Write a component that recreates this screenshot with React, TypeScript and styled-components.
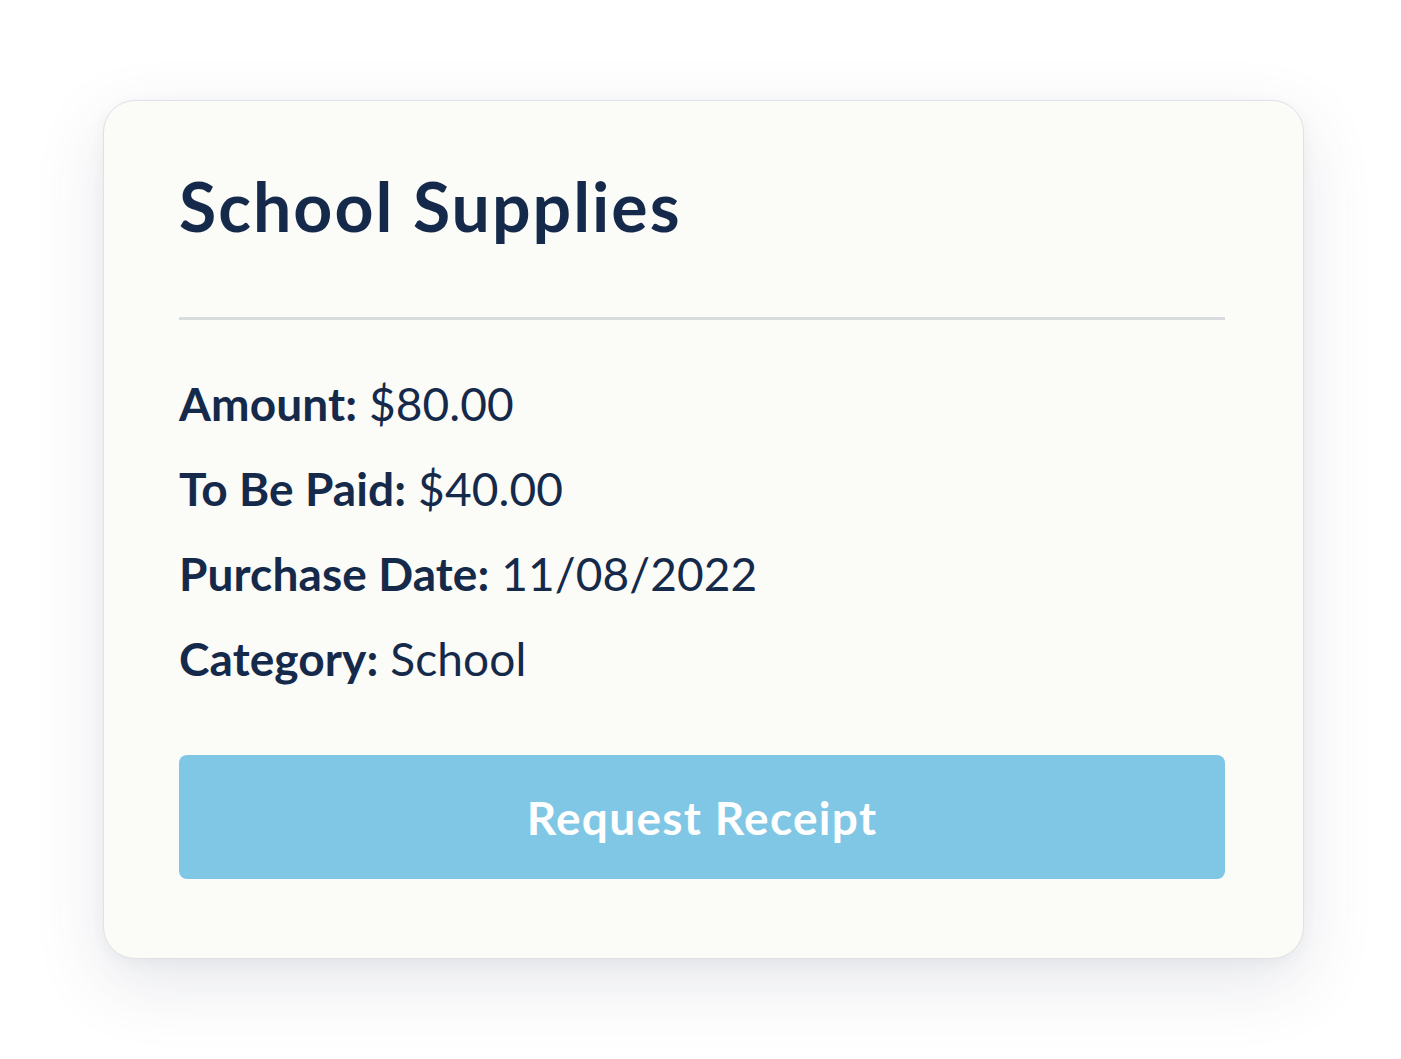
import React from "react";
import styled, { createGlobalStyle } from "styled-components";

const Global = createGlobalStyle`
  html, body { margin: 0; padding: 0; background: #ffffff; }
  body { font-family: "Lato", "Noto Sans", sans-serif; }
`;

const Page = styled.div`
  width: 1401px;
  height: 1059px;
  box-sizing: border-box;
  padding: 100px 97px 100px 103px;
  display: flex;
`;

const Card = styled.div`
  flex: 1;
  box-sizing: border-box;
  background: #fbfbf8;
  border: 1px solid #e0e1e4;
  border-radius: 32px;
  box-shadow: 0 24px 70px rgba(60, 70, 100, 0.13), 0 4px 14px rgba(60, 70, 100, 0.05);
  padding: 57px 78px 79px 75px;
  display: flex;
  flex-direction: column;
  color: #152a4a;
`;

const Title = styled.h1`
  margin: 0;
  font-size: 68px;
  font-weight: 700;
  line-height: 96px;
  letter-spacing: 2px;
`;

const Divider = styled.hr`
  margin: 63px 0 0 0;
  border: none;
  height: 3px;
  background: #d8dcdf;
`;

const Details = styled.div`
  margin-top: 54px;
  display: flex;
  flex-direction: column;
  gap: 25px;
`;

const Row = styled.div`
  font-size: 46px;
  line-height: 60px;
  font-weight: 400;
  letter-spacing: 0.1px;
`;

const Label = styled.span`
  font-weight: 700;
`;

const Button = styled.button`
  margin-top: 66px;
  height: 124px;
  border: none;
  border-radius: 8px;
  background: #7fc7e5;
  color: #ffffff;
  font-family: "Lato", "Noto Sans", sans-serif;
  font-size: 46px;
  font-weight: 700;
  letter-spacing: 1.3px;
  cursor: pointer;
`;

const rows = [
  { label: "Amount:", value: "$80.00" },
  { label: "To Be Paid:", value: "$40.00" },
  { label: "Purchase Date:", value: "11/08/2022" },
  { label: "Category:", value: "School" },
];

export default function App() {
  return (
    <>
      <Global />
      <Page>
        <Card>
          <Title>School Supplies</Title>
          <Divider />
          <Details>
            {rows.map((r) => (
              <Row key={r.label}>
                <Label>{r.label}</Label> {r.value}
              </Row>
            ))}
          </Details>
          <Button>Request Receipt</Button>
        </Card>
      </Page>
    </>
  );
}
